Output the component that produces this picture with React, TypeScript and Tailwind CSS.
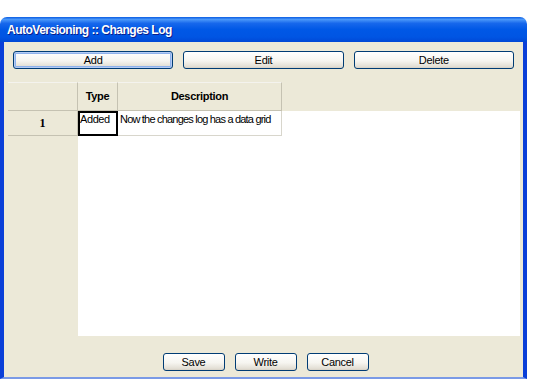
const FONT = "font-['Liberation_Sans',Arial,sans-serif]";

const BTN =
  "flex items-center justify-center rounded-[3px] border border-[#003C74] bg-[linear-gradient(to_bottom,#FFFFFF_0%,#F6F5F0_55%,#E3DFD5_90%,#D6D0C5_100%)] text-[11px] tracking-[-0.3px] text-black";

function Button({ label, width, active }: { label: string; width?: string; active?: boolean }) {
  return (
    <button
      className={`${BTN} h-[18px] ${width ?? "flex-1"} ${
        active ? "shadow-[inset_0_0_0_1px_#B5CCF4,inset_0_0_0_2px_#8DB1EC]" : ""
      }`}
    >
      {label}
    </button>
  );
}

export default function App() {
  return (
    <div className={`h-[379px] w-[536px] overflow-hidden bg-white ${FONT}`}>
      <div className="mt-[17px] flex w-[527px] flex-col">
        {/* title bar */}
        <div className="flex h-[25px] items-center rounded-t-[7px] bg-[linear-gradient(to_bottom,#0A5DE3_0%,#4A97F9_10%,#1768EC_25%,#0058E6_50%,#0055E3_80%,#0048D6_100%)] pl-[7px]">
          <span className="text-[12px] font-bold tracking-[-0.5px] text-white [text-shadow:1px_1px_0_#0A1E8C]">
            AutoVersioning :: Changes Log
          </span>
        </div>

        {/* body */}
        <div className="flex h-[337px] flex-col border-x-[4px] border-b-2 border-x-[#0A3FD8] border-b-[#7A9AE6] bg-[#ECE9D8]">
          <div className="mt-[9px] flex gap-[10px] px-[9px]">
            <Button label="Add" active />
            <Button label="Edit" />
            <Button label="Delete" />
          </div>

          {/* grid */}
          <div className="mx-[4px] mt-[13px] mr-[3px] flex h-[254px] flex-col">
            <div className="flex h-[29px] text-[11px] font-bold text-black">
              <div className="w-[70px] border-r border-b border-[#C5C2B2] border-t border-t-[#F4F3EE]" />
              <div className="flex w-[40px] items-center justify-center border-r border-b border-[#C5C2B2] border-t border-t-[#F4F3EE] tracking-[-0.3px]">
                Type
              </div>
              <div className="flex w-[164px] items-center justify-center border-r border-b border-[#C5C2B2] border-t border-t-[#F4F3EE] tracking-[-0.3px]">
                Description
              </div>
              <div className="flex-1" />
            </div>
            <div className="flex flex-1">
              <div className="w-[70px]">
                <div className="flex h-[25px] items-center justify-center border-r border-b border-[#C5C2B2] text-[12px] font-bold font-['Liberation_Serif',serif]">
                  1
                </div>
              </div>
              <div className="flex-1 bg-white">
                <div className="flex h-[25px] text-[11px] text-black">
                  <div className="w-[40px] border-2 border-black leading-[12px] tracking-[-0.4px]">Added</div>
                  <div className="w-[164px] overflow-hidden whitespace-nowrap border-r border-b border-[#D8D6CC] pl-[2px] pt-[2px] leading-[12px] tracking-[-0.8px]">
                    Now the changes log has a data grid
                  </div>
                </div>
              </div>
            </div>
          </div>

          <div className="mt-[17px] flex justify-center gap-[10px] pl-[4px]">
            <Button label="Save" width="w-[62px]" />
            <Button label="Write" width="w-[62px]" />
            <Button label="Cancel" width="w-[62px]" />
          </div>
        </div>
      </div>
    </div>
  );
}
